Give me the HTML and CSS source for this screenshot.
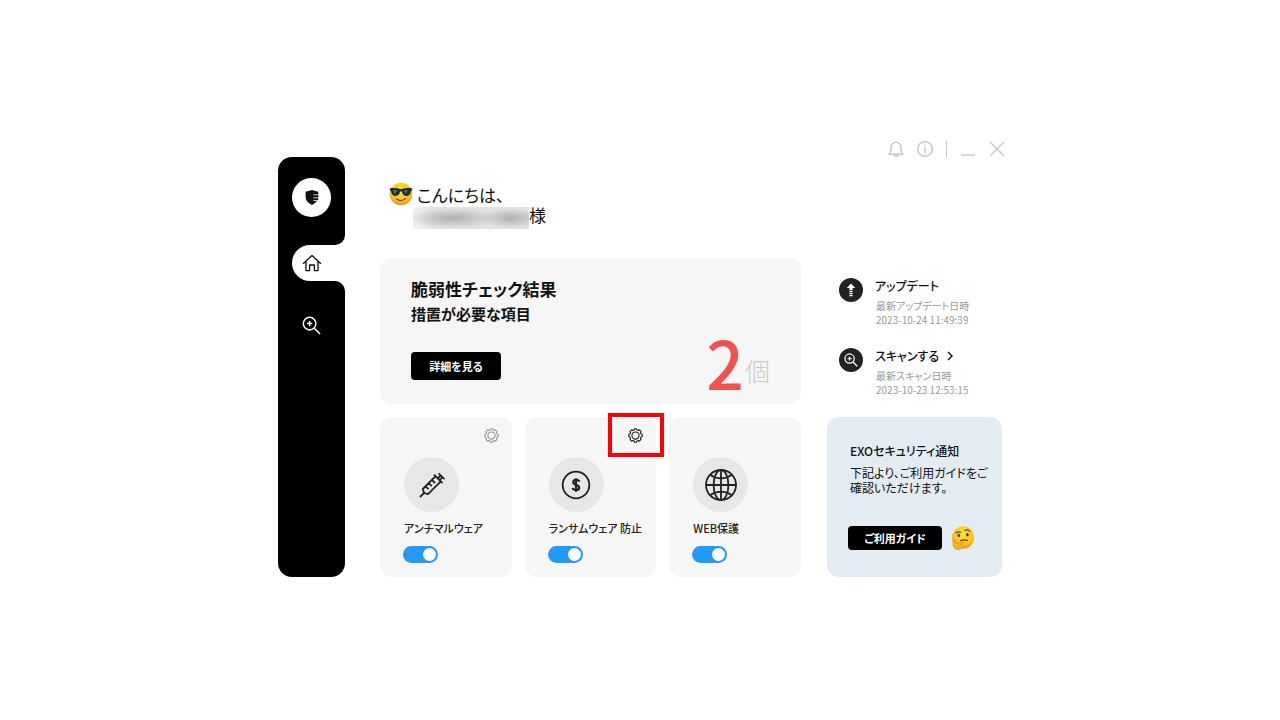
FILE: index.html
```html
<!DOCTYPE html>
<html lang="ja">
	<head>
		<meta charset="utf-8" />
		<meta name="viewport" content="width=device-width, initial-scale=1.0" />
		<title>EXOセキュリティ</title>

		<link rel="stylesheet" href="styles.css">
	</head>

	<body>
		<!-- Shared icons -->
		<svg class="sprite" aria-hidden="true">
			<symbol id="icon-gear" viewBox="0 0 16 16">
				<path d="M6.6 2 L7 .8 H9 L9.4 2 L10.9 2.6 L12.1 2 L13.8 3.7 L13.3 5 L14 6.5 L15.2 7 V9 L14 9.5 L13.3 11 L13.8 12.3 L12.1 14 L10.9 13.4 L9.4 14 L9 15.2 H7 L6.6 14 L5.1 13.4 L3.9 14 L2.2 12.3 L2.7 11 L2 9.5 L.8 9 V7 L2 6.5 L2.7 5 L2.2 3.7 L3.9 2 L5.1 2.6 Z" stroke-linejoin="round" />
				<circle cx="8" cy="8" r="3.8" />
			</symbol>
			<symbol id="icon-search" viewBox="0 0 20 20">
				<circle cx="8" cy="8" r="6.6" />
				<path d="M12.9 12.9 L19 19 M5.2 8 H10.8 M8 5.2 V10.8" />
			</symbol>
		</svg>

		<div class="app">
			<header class="titlebar">
				<button type="button" aria-label="通知">
					<svg viewBox="0 0 16 16"><path d="M1.2 13.2 C2.6 12 3 10.6 3 8 V6.2 A5 5 0 0 1 13 6.2 V8 C13 10.6 13.4 12 14.8 13.2 Z M6 13.6 A2 1.8 0 0 0 10 13.6" stroke-linejoin="round" /></svg>
				</button>
				<button type="button" aria-label="情報">
					<svg viewBox="0 0 16 16"><circle cx="8" cy="8" r="7.3" /><path d="M8 3.5 V5.2 M8 6.4 V12.4" /></svg>
				</button>
				<span class="divider"></span>
				<button type="button" aria-label="最小化">
					<svg viewBox="0 0 16 16"><path d="M1 14 H15" /></svg>
				</button>
				<button type="button" aria-label="閉じる">
					<svg viewBox="0 0 16 16"><path d="M1 1 L15 15 M15 1 L1 15" /></svg>
				</button>
			</header>

			<div class="content">
				<nav class="sidebar">
					<div class="sidebar-top">
						<span class="logo">
							<svg viewBox="0 0 16 18"><path d="M8 1 L14.6 3 V5.8 H9.4 V6.6 H14.8 V9 H9.4 V9.8 H14.6 V12 H9.4 V12.8 H13 C11.8 14.8 10.2 16 8 17 C3.4 14.8 1.2 12 1.2 8 V3 Z" /></svg>
						</span>
					</div>
					<div class="sidebar-active">
						<a class="tab" href="#" aria-label="ホーム">
							<svg viewBox="0 0 20 18"><path d="M1.4 9.4 L10 1.6 L18.6 9.4 M4 7.6 V16.6 H7.6 V11 H12.4 V16.6 H16 V7.6" stroke-linejoin="round" stroke-linecap="round" /></svg>
						</a>
					</div>
					<div class="sidebar-rest">
						<a href="#" aria-label="スキャン"><svg><use href="#icon-search" /></svg></a>
					</div>
				</nav>

				<main class="main">
					<div class="greeting">
						<svg class="emoji" viewBox="0 0 24 24">
							<defs>
								<radialGradient id="face" cx=".5" cy=".35" r=".65">
									<stop offset="0" stop-color="#ffe04a" />
									<stop offset=".7" stop-color="#fcc21b" />
									<stop offset="1" stop-color="#ee8f1c" />
								</radialGradient>
							</defs>
							<circle cx="12" cy="12" r="11.3" fill="url(#face)" />
							<path d="M.8 6.4 C4 5.6 8 5.8 12 7.2 C16 5.8 20 5.6 23.2 6.4 V8.2 L22 9 C21.6 12.6 20 14 17.4 14 C14.6 14 13.4 12.4 12.9 9.6 H11.1 C10.6 12.4 9.4 14 6.6 14 C4 14 2.4 12.6 2 9 L.8 8.2 Z" fill="#222c33" />
							<path d="M4.4 8.2 L8.4 8.6 L5.4 11.8 Z M15.2 8.6 L19 8.2 L16.2 11.8 Z" fill="#64737c" />
							<path d="M7.6 17 Q12.4 20.4 16.6 16.4" fill="none" stroke="#6b4216" stroke-width="1.3" stroke-linecap="round" />
						</svg>
						<p>
							こんにちは、<br />
							<span class="masked-name"></span>様
						</p>
					</div>

					<section class="panel summary">
						<div>
							<h1>脆弱性チェック結果</h1>
							<h2>措置が必要な項目</h2>
							<button type="button" class="button">詳細を見る</button>
						</div>
						<p class="count"><strong>2</strong><span>個</span></p>
					</section>

					<div class="cards">
						<section class="panel card">
							<button type="button" class="gear" aria-label="設定"><svg><use href="#icon-gear" /></svg></button>
							<span class="round">
								<svg viewBox="0 0 30 30">
									<path d="M3 27 L7.6 22.4 M7 23 L5.8 19 L18.6 6.2 L23.8 11.4 L11 24.2 Z M17 4.6 L25.4 13 M20.8 8.4 L23.6 5.6 M22.6 10.2 L25.6 7.2 M21.6 3.4 L27.4 9.2 M8.6 16.4 L11.6 19.2 M11.8 13.2 L14.8 16.2 M15 10 L18 13" stroke-linejoin="round" />
								</svg>
							</span>
							<label for="anti-malware">アンチマルウェア</label>
							<input type="checkbox" class="toggle" id="anti-malware" checked />
						</section>

						<section class="panel card">
							<button type="button" class="gear dark" aria-label="設定"><svg><use href="#icon-gear" /></svg></button>
							<span class="highlight"></span>
							<span class="round">
								<svg viewBox="0 0 30 30">
									<circle cx="15" cy="15" r="13.3" />
									<path d="M18.3 11.8 C17.6 9.2 12.2 9.2 12.2 12.3 C12.2 15.4 18.2 14.4 18.2 17.8 C18.2 20.8 12.2 20.8 11.6 17.9 M15 8.2 V21.8" stroke-width="2.2" />
								</svg>
							</span>
							<label for="anti-ransomware">ランサムウェア 防止</label>
							<input type="checkbox" class="toggle" id="anti-ransomware" checked />
						</section>

						<section class="panel card">
							<span class="round">
								<svg class="globe" viewBox="0 0 32 32">
									<circle cx="16" cy="16" r="15" />
									<ellipse cx="16" cy="16" rx="7.4" ry="15" />
									<path d="M1 16 H31 M16 1 V31 M5 5.8 Q16 13 27 5.8 M5 26.2 Q16 19 27 26.2" />
								</svg>
							</span>
							<label for="web-protection">WEB保護</label>
							<input type="checkbox" class="toggle" id="web-protection" checked />
						</section>
					</div>
				</main>

				<aside class="aside">
					<ul class="status">
						<li>
							<span class="badge">
								<svg viewBox="0 0 24 24"><path d="M12 5.6 L16.2 10 H13.6 V12 H10.4 V10 H7.8 Z M10.4 12.8 H13.6 V14.2 H10.4 Z M10.4 15 H13.6 V16.2 H10.4 Z M10.4 17 H13.6 V18.2 H10.4 Z" fill="#fff" stroke="none" /></svg>
							</span>
							<div>
								<h3>アップデート</h3>
								<p>最新アップデート日時</p>
								<time>2023-10-24 11:49:39</time>
							</div>
						</li>
						<li>
							<span class="badge">
								<svg class="lens"><use href="#icon-search" /></svg>
							</span>
							<div>
								<h3>
									<a href="#">スキャンする
										<svg class="chevron" viewBox="0 0 6 10"><path d="M1 1 L5 5 L1 9" /></svg>
									</a>
								</h3>
								<p>最新スキャン日時</p>
								<time>2023-10-23 12:53:15</time>
							</div>
						</li>
					</ul>

					<section class="panel notice">
						<h3>EXOセキュリティ通知</h3>
						<p>下記より、ご利用ガイドをご確認いただけます。</p>
						<div class="notice-action">
							<button type="button" class="button">ご利用ガイド</button>
							<svg class="emoji" viewBox="0 0 24 24">
								<circle cx="12" cy="11.6" r="11" fill="url(#face)" />
								<path d="M5 7 Q7 5 9.6 6.4 M14 4.4 Q17 3 19 5.4" fill="none" stroke="#6b4216" stroke-width="1.1" stroke-linecap="round" />
								<ellipse cx="7.8" cy="9.4" rx="1.3" ry="1.7" fill="#4a3420" />
								<ellipse cx="16.4" cy="8.8" rx="1.3" ry="1.7" fill="#4a3420" />
								<path d="M9.4 14.8 Q13 13 16.4 14.6" fill="none" stroke="#6b4216" stroke-width="1.2" stroke-linecap="round" />
								<path d="M2.4 14.6 C3.4 13.4 4.6 14 4.8 15.4 L5.2 17.4 L11.4 15.8 C13.2 15.4 13.6 17 12 17.6 L9.6 18.6 C12 19 12.2 20.4 11 21.6 C9.4 23.6 6.6 24 4.6 23 C2.2 21.8 1.4 17.6 2.4 14.6 Z" fill="#f9b520" stroke="#e08a1c" stroke-width=".7" />
							</svg>
						</div>
					</section>
				</aside>
			</div>
		</div>
	</body>
</html>
```
FILE: styles.css
```css
* {
	box-sizing: border-box;
}

body {
	margin: 0;
	padding: 0 0 5px;
	min-height: 100vh;

	display: flex;
	justify-content: center;
	align-items: center;

	font-family: "Noto Sans CJK JP", sans-serif;
	/* Use the font's own proportional kana */
	font-feature-settings: "palt";
	font-size: 11px;
	line-height: 14px;
	color: #111;
	background: #fff;
}

h1, h2, h3, p, ul {
	margin: 0;
	padding: 0;
}

a {
	color: inherit;
	text-decoration: none;
}

button {
	padding: 0;
	border: 0;
	background: none;
	color: inherit;
	font: inherit;
	font-feature-settings: inherit;
	cursor: pointer;
}

svg {
	display: block;
	fill: none;
	stroke: currentColor;
}

.sprite {
	position: absolute;
	width: 0;
	height: 0;
}

.app {
	width: 100%;
	max-width: 724px;
}



/**
 * Window buttons
 */
.titlebar {
	display: flex;
	justify-content: flex-end;
	align-items: center;
	gap: 13px;
	height: 19px;
	margin-right: -3px;
	padding-top: 2px;
	color: #c8c8c8;
}

.titlebar svg {
	width: 16px;
	height: 16px;
	stroke-width: 1.5;
}

.divider {
	width: 1px;
	height: 16px;
	background: #c8c8c8;
}

.content {
	display: grid;
	grid-template-columns: 67px minmax(0, 1fr) 175px;
	min-height: 420px;
}



/**
 * Sidebar: the black parts above and below curve away from the open tab
 */
.sidebar {
	display: flex;
	flex-direction: column;
	color: #fff;
}

.sidebar-top {
	height: 88px;
	padding: 21px 14px 0;
	border-radius: 14px 14px 10px 0;
	background: #000;
}

.logo {
	display: flex;
	justify-content: center;
	align-items: center;
	width: 39px;
	height: 39px;
	border-radius: 50%;
	background: #fff;
}

.logo svg {
	width: 16px;
	height: 17px;
	fill: #111;
	stroke: none;
}

.sidebar-active {
	padding-left: 14px;
	background: #000;
}

.tab {
	display: flex;
	align-items: center;
	height: 36px;
	padding-left: 10px;
	border-radius: 18px 0 0 18px;
	background: #fff;
	color: #111;
}

.tab svg {
	width: 20px;
	height: 18px;
	stroke-width: 1.3;
}

.sidebar-rest {
	flex: 1;
	padding: 35px 24px;
	border-radius: 0 10px 14px 14px;
	background: #000;
}

.sidebar-rest svg {
	width: 19px;
	height: 19px;
	stroke-width: 1.6;
}



/**
 * Main column
 */
.main {
	padding: 25px 26px 0 35px;
}

.greeting {
	display: flex;
	gap: 4px;
	padding-left: 9px;
	font-size: 17px;
	line-height: 20px;
}

.greeting p {
	padding-top: 3px;
}

.emoji {
	width: 24px;
	height: 24px;
	stroke: none;
}

.masked-name {
	display: inline-block;
	width: 116px;
	height: 22px;
	margin: 2px 0 -2px -4px;
	vertical-align: top;
	background:
		radial-gradient(ellipse 46px 10px at 40px 50%, #b0b0b0, transparent),
		radial-gradient(ellipse 30px 10px at 98px 50%, #b0b0b0, transparent),
		linear-gradient(to right, #f2f2f2, #e2e2e2 20px);
}

.panel {
	border-radius: 12px;
	background: #f6f6f6;
}

.button {
	height: 28px;
	border-radius: 4px;
	background: #000;
	color: #fff;
	font-weight: 700;
}

.summary {
	display: flex;
	justify-content: space-between;
	align-items: flex-end;
	height: 146px;
	margin-top: 31px;
	padding: 0 31px 24px;
}

.summary h1 {
	font-size: 17px;
	line-height: 24px;
	font-weight: 700;
}

.summary h2 {
	margin: 3px 0 28px;
	font-size: 15px;
	line-height: 20px;
	font-weight: 700;
}

.summary .button {
	width: 90px;
}

.count {
	display: flex;
	align-items: flex-end;
	gap: 1px;
	color: #ccc;
	font-size: 25px;
	line-height: 20px;
	font-weight: 300;
}

.count strong {
	color: #ef5350;
	font-size: 66px;
	line-height: 38px;
	font-weight: 500;
}

.cards {
	display: grid;
	grid-template-columns: repeat(3, minmax(0, 1fr));
	gap: 13px;
	margin-top: 13px;
}

.card {
	position: relative;
	display: flex;
	flex-direction: column;
	align-items: flex-start;
	height: 160px;
	padding: 40px 0 0 23px;
	font-weight: 500;
	color: #222;
}

.gear {
	position: absolute;
	top: 11px;
	right: 13px;
	color: #999;
}

.gear.dark {
	color: #222;
}

.gear svg {
	width: 15px;
	height: 15px;
	stroke-width: 1.2;
}

.highlight {
	position: absolute;
	top: -4px;
	right: -8px;
	width: 56px;
	height: 44px;
	border: 4px solid #f00;
	pointer-events: none;
}

.round {
	display: flex;
	justify-content: center;
	align-items: center;
	width: 55px;
	height: 55px;
	margin: 0 0 9px 1px;
	border-radius: 50%;
	background: #e7e7e7;
}

.round svg {
	width: 30px;
	height: 30px;
	stroke-width: 1.8;
}

.round .globe {
	width: 32px;
	height: 32px;
}

.card label {
	margin-left: 1px;
}

.toggle {
	appearance: none;
	display: flex;
	justify-content: flex-start;
	width: 35px;
	height: 17px;
	margin: 11px 0 0;
	padding: 2px;
	border-radius: 9px;
	background: #bbb;
	cursor: pointer;
}

.toggle::before {
	content: "";
	width: 13px;
	height: 13px;
	border-radius: 50%;
	background: #fff;
}

.toggle:checked {
	justify-content: flex-end;
	background: #2699f4;
}



/**
 * Right column
 */
.aside {
	display: flex;
	flex-direction: column;
	padding-top: 121px;
}

.status {
	list-style: none;
}

.status li {
	display: flex;
	gap: 12px;
	padding-left: 12px;
}

.status li + li {
	margin-top: 21px;
}

.badge {
	display: flex;
	justify-content: center;
	align-items: center;
	width: 24px;
	height: 24px;
	border-radius: 50%;
	background: #222;
	color: #fff;
}

.badge svg {
	width: 24px;
	height: 24px;
}

.badge .lens {
	width: 14px;
	height: 14px;
	stroke-width: 1.8;
}

.status h3 {
	margin-bottom: 5px;
	font-size: 12px;
	line-height: 16px;
	font-weight: 500;
}

.status a {
	display: flex;
	align-items: center;
	gap: 8px;
}

.chevron {
	width: 6px;
	height: 10px;
	stroke-width: 1.4;
}

.status p,
.status time {
	display: block;
	padding-left: 1px;
	font-size: 10px;
	line-height: 14px;
	color: #999;
}

.notice {
	height: 160px;
	margin-top: auto;
	padding: 26px 10px 0 21px;
	background: #e3ebf3;
}

.notice h3 {
	padding-left: 2px;
	font-size: 12px;
	line-height: 16px;
	font-weight: 500;
}

.notice p {
	padding: 6px 0 0 2px;
	font-size: 12px;
	line-height: 15px;
}

.notice-action {
	display: flex;
	align-items: center;
	gap: 9px;
	margin-top: 31px;
}

.notice .button {
	width: 94px;
	height: 24px;
}
```
